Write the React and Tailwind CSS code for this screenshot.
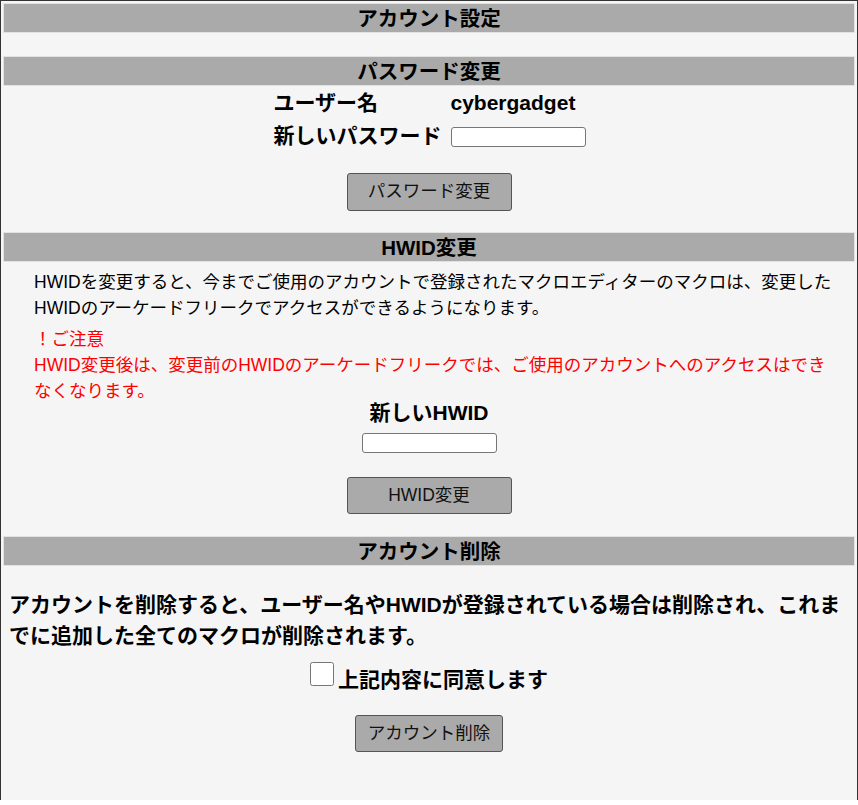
import { useState } from "react";

const font = { fontFamily: '"Liberation Sans", "Noto Sans CJK JP", sans-serif' };

const Bar = ({ children }) => (
  <div className="mx-[2px] h-[30px] border border-[#e2e2e2] bg-[#aaaaaa] flex items-center justify-center pt-[2px] text-[20.5px] font-bold text-black leading-none">
    {children}
  </div>
);

const GrayButton = ({ children, className = "" }) => (
  <button
    type="button"
    className={`h-[37px] rounded-[3px] border border-[#555] bg-[#aaaaaa] text-[17.5px] text-[#111] leading-none ${className}`}
  >
    {children}
  </button>
);

export default function App() {
  const [password, setPassword] = useState("");
  const [hwid, setHwid] = useState("");
  const [agree, setAgree] = useState(false);

  return (
    <div style={font} className="bg-white">
      <div className="h-[800px] border-x border-t border-[#333] bg-[#f5f5f5] pt-[2px] text-black">
        <Bar>アカウント設定</Bar>

        <div className="mt-[23px]">
          <Bar>パスワード変更</Bar>
        </div>

        {/* password */}
        <div className="flex justify-center mt-[1px]">
          <div className="grid grid-cols-[177px_135px] ml-[1px] text-[21px] font-bold">
            <div className="h-[32px] leading-[32px]">ユーザー名</div>
            <div className="h-[32px] leading-[32px]">cybergadget</div>
            <div className="h-[34px] leading-[34px]">新しいパスワード</div>
            <div className="h-[34px] flex items-center pt-[2px]">
              <input
                type="password"
                value={password}
                onChange={(e) => setPassword(e.target.value)}
                className="w-[135px] h-[20px] rounded-[3px] border border-[#767676] bg-white"
              />
            </div>
          </div>
        </div>
        <div className="flex justify-center mt-[20px]">
          <GrayButton className="w-[165px] h-[38px]">パスワード変更</GrayButton>
        </div>

        {/* hwid */}
        <div className="mt-[21px]">
          <Bar>HWID変更</Bar>
        </div>
        <div className="ml-[33px] w-[805px] text-[17.5px] leading-[26px]">
          <p className="mt-[7px]">
            HWIDを変更すると、今までご使用のアカウントで登録されたマクロエディターのマクロは、変更したHWIDのアーケードフリークでアクセスができるようになります。
          </p>
          <p className="mt-[5px] text-[#ff0000]">
            ！ご注意
            <br />
            HWID変更後は、変更前のHWIDのアーケードフリークでは、ご使用のアカウントへのアクセスはできなくなります。
          </p>
        </div>
        <div className="text-center text-[21px] font-bold leading-[16px] mt-[1px]">新しいHWID</div>
        <div className="flex justify-center mt-[12px]">
          <input
            type="text"
            value={hwid}
            onChange={(e) => setHwid(e.target.value)}
            className="w-[135px] h-[20px] rounded-[3px] border border-[#767676] bg-white"
          />
        </div>
        <div className="flex justify-center mt-[24px]">
          <GrayButton className="w-[165px]">HWID変更</GrayButton>
        </div>

        {/* delete */}
        <div className="mt-[22px]">
          <Bar>アカウント削除</Bar>
        </div>
        <p className="ml-[8px] w-[842px] mt-[23px] text-[21px] font-bold leading-[31px]">
          アカウントを削除すると、ユーザー名やHWIDが登録されている場合は削除され、これまでに追加した全てのマクロが削除されます。
        </p>
        <label className="flex justify-center items-start mt-[10px] gap-[4px] text-[21px] font-bold leading-[38px]">
          <input
            type="checkbox"
            checked={agree}
            onChange={(e) => setAgree(e.target.checked)}
            className="w-[24px] h-[24px] m-0 mt-[1px]"
          />
          <span>上記内容に同意します</span>
        </label>
        <div className="flex justify-center mt-[16px]">
          <GrayButton className="px-[12px]">アカウント削除</GrayButton>
        </div>
      </div>
    </div>
  );
}
